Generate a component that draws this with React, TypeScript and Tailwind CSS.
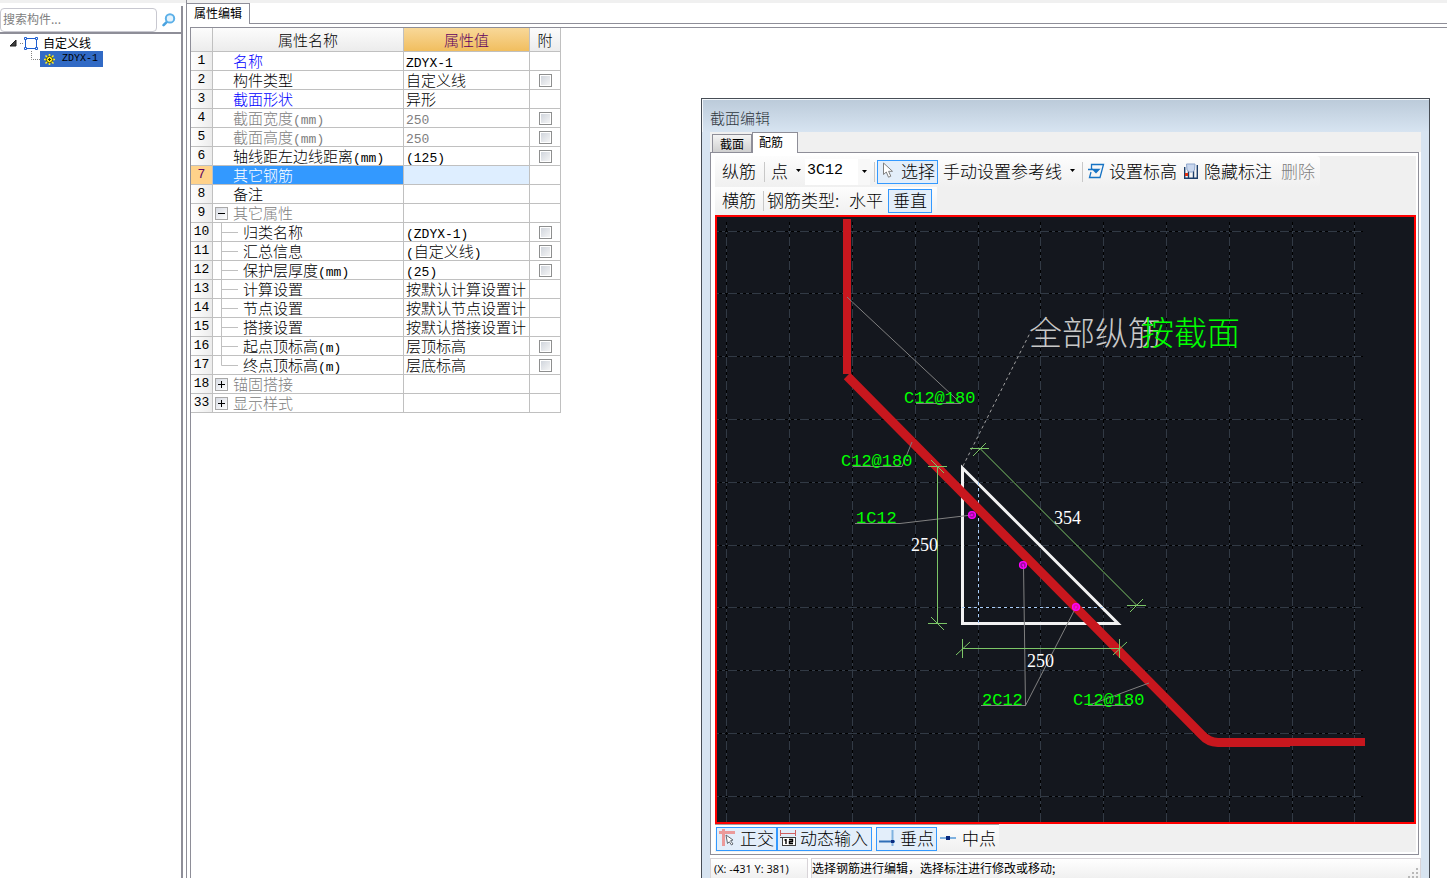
import { useState } from "react";
import type { ReactNode } from "react";

interface Row {
  no: number;
  name: string;
  value?: string;
  check?: boolean;
  tone?: "link" | "muted";
  group?: "open" | "closed";
  child?: boolean;
  last?: boolean;
}

const rows: Row[] = [
  { no: 1, name: "名称", value: "ZDYX-1", tone: "link" },
  { no: 2, name: "构件类型", value: "自定义线", check: true },
  { no: 3, name: "截面形状", value: "异形", tone: "link" },
  { no: 4, name: "截面宽度(mm)", value: "250", check: true, tone: "muted" },
  { no: 5, name: "截面高度(mm)", value: "250", check: true, tone: "muted" },
  { no: 6, name: "轴线距左边线距离(mm)", value: "(125)", check: true },
  { no: 7, name: "其它钢筋" },
  { no: 8, name: "备注" },
  { no: 9, name: "其它属性", tone: "muted", group: "open" },
  { no: 10, name: "归类名称", value: "(ZDYX-1)", check: true, child: true },
  { no: 11, name: "汇总信息", value: "(自定义线)", check: true, child: true },
  { no: 12, name: "保护层厚度(mm)", value: "(25)", check: true, child: true },
  { no: 13, name: "计算设置", value: "按默认计算设置计", child: true },
  { no: 14, name: "节点设置", value: "按默认节点设置计", child: true },
  { no: 15, name: "搭接设置", value: "按默认搭接设置计", child: true },
  { no: 16, name: "起点顶标高(m)", value: "层顶标高", check: true, child: true },
  { no: 17, name: "终点顶标高(m)", value: "层底标高", check: true, child: true, last: true },
  { no: 18, name: "锚固搭接", tone: "muted", group: "closed" },
  { no: 33, name: "显示样式", tone: "muted", group: "closed" },
];

const gridX = [726, 789, 852, 915, 978, 1040, 1103, 1166, 1229, 1292, 1354];
const gridY = [231, 293, 356, 419, 482, 545, 607, 670, 733, 796];

// Latin runs use the monospaced face, a little smaller than the Chinese text
function Mixed({ text }: { text: string }) {
  return (
    <>
      {text.split(/([\x20-\x7e]+)/).map((part, i) =>
        i % 2 ? (
          <span key={i} className="font-['Liberation_Mono',monospace] text-[13px] leading-none">{part}</span>
        ) : (
          part
        )
      )}
    </>
  );
}

function Sidebar() {
  return (
    <aside className="w-[183px] shrink-0 pt-1.5">
      <div className="h-full border-r-2 border-[#8e8e98]">
        <form className="flex h-[28px] items-start border-b-2 border-[#8e8e98]" onSubmit={(e) => e.preventDefault()}>
          <input
            type="text"
            aria-label="搜索构件"
            placeholder="搜索构件..."
            className="mt-0.5 h-6 w-[157px] rounded-sm border border-[#c8c8d0] px-0.5 pb-1 text-xs font-normal outline-none placeholder:text-[#808080]"
          />
          <button type="submit" aria-label="搜索" className="mt-1 flex h-5 w-6 items-center justify-center">
            <svg width="14" height="14" viewBox="0 0 14 14" fill="none">
              <path d="M4.6 9.2L1.6 12.2" stroke="#4aa3e0" strokeWidth="2.6" strokeLinecap="round" />
              <circle cx="8" cy="5.4" r="4.2" fill="#e4f3fd" stroke="#5cb0e8" strokeWidth="2" />
            </svg>
          </button>
        </form>
        <ul className="pt-px text-xs leading-4 font-normal">
          <li className="flex h-4 items-center pl-2">
            <svg width="33" height="16" viewBox="0 0 33 16" fill="none" className="mr-0.5 shrink-0">
              <path d="M8 5V11H2Z" fill="#404040" stroke="#202020" />
              <path d="M12 8.5H16" stroke="#808080" strokeDasharray="1 1" />
              <path d="M17.5 3.5H28.5V13.5H17.5Z" stroke="#1f5fd0" />
              <path d="M16.5 2.5h2v2h-2zM27.5 2.5h2v2h-2zM16.5 12.5h2v2h-2zM27.5 12.5h2v2h-2z" fill="#fff" stroke="#1f5fd0" />
            </svg>
            自定义线
          </li>
          <li className="flex h-4 items-center pl-[31px]">
            <svg width="9" height="16" viewBox="0 0 9 16" fill="none" className="shrink-0">
              <path d="M0.5 0V8.5H9" stroke="#808080" strokeDasharray="1 1" />
            </svg>
            <span className="flex h-4 items-center bg-[#316ac5] pr-[5px] pl-1 font-['Liberation_Mono',monospace] text-[10px] text-black">
              <svg width="11" height="11" viewBox="0 0 11 11" className="mr-[7px]" fill="none">
                <path d="M5.5 0V11M0 5.5H11M1.5 1.5L9.5 9.5M9.5 1.5L1.5 9.5" stroke="#ffee22" strokeWidth="1.6" />
                <circle cx="5.5" cy="5.5" r="3.2" fill="#ffee22" stroke="#303000" strokeWidth="0.8" />
                <path d="M4 5.5H7M5.5 4V7" stroke="#303000" />
              </svg>
              ZDYX-1
            </span>
          </li>
        </ul>
      </div>
    </aside>
  );
}

function PropertyTable() {
  const [selected, setSelected] = useState(7);
  const cell = "border-r border-b border-[#c0c0c0] p-0";

  return (
    <table className="w-[370px] table-fixed border-separate border-spacing-0 text-[15px] leading-[18px]">
      <colgroup>
        <col className="w-[22px]" />
        <col className="w-[191px]" />
        <col className="w-[126px]" />
        <col className="w-[31px]" />
      </colgroup>
      <thead>
        <tr className="h-6">
          <th className={`${cell} bg-linear-to-b from-[#fcfcfc] to-[#ececec]`} />
          <th className={`${cell} bg-linear-to-b from-[#fcfcfc] to-[#ececec] font-light`}>属性名称</th>
          <th className={`${cell} bg-linear-to-b from-[#f8d898] to-[#f1be5e] font-light text-[#600060]`}>属性值</th>
          <th className={`${cell} bg-linear-to-b from-[#fcfcfc] to-[#ececec] font-light`}>附</th>
        </tr>
      </thead>
      <tbody>
        {rows.map((row) => {
          const active = row.no === selected;
          const color = active
            ? "text-white"
            : row.tone === "link"
            ? "text-[#0000ff]"
            : row.tone === "muted"
            ? "text-[#808080]"
            : "text-black";
          return (
            <tr key={row.no} className="h-[19px]" onClick={() => setSelected(row.no)}>
              <td
                className={`${cell} text-center font-['Liberation_Mono',monospace] text-[13px] ${
                  active ? "bg-[#ffd28a] text-[#600060]" : "bg-linear-to-r from-white to-[#ececec]"
                }`}
              >
                {row.no}
              </td>
              <td className={`${cell} ${color} ${active ? "bg-[#3399ff]" : ""}`}>
                <div className="flex h-[18px] items-center">
                  {row.child ? (
                    <svg width="30" height="18" viewBox="0 0 30 18" fill="none" className="shrink-0 overflow-visible">
                      <path d={row.last ? "M8.5 -1V9.5H25" : "M8.5 -1V18M8.5 9.5H25"} stroke="#c0c0c0" />
                    </svg>
                  ) : row.group ? (
                    <button
                      type="button"
                      aria-label={row.name}
                      className="mr-[5px] ml-0.5 flex h-[13px] w-[13px] shrink-0 items-center justify-center border border-[#a8a8a8] bg-linear-to-br from-[#d8dce4] to-white"
                    >
                      <svg width="7" height="7" viewBox="0 0 7 7" stroke="#000">
                        <path d={row.group === "open" ? "M0 3.5H7" : "M0 3.5H7M3.5 0V7"} />
                      </svg>
                    </button>
                  ) : (
                    <span className="w-5 shrink-0" />
                  )}
                  <span className="whitespace-nowrap">
                    <Mixed text={row.name} />
                  </span>
                </div>
              </td>
              <td className={`${cell} ${row.tone === "muted" ? "text-[#808080]" : ""} ${active ? "bg-[#deeeff]" : ""}`}>
                <div className="flex h-[18px] items-center pl-0.5">
                  <span className="whitespace-nowrap">
                    <Mixed text={row.value ?? ""} />
                  </span>
                </div>
              </td>
              <td className={cell}>
                {row.check && (
                  <input
                    type="checkbox"
                    aria-label={`附 ${row.name}`}
                    className="mx-auto block h-[13px] w-[13px] appearance-none border border-[#8e8f8f] bg-linear-to-br from-[#cdd2da] to-[#f8f8f8] ring-1 ring-white ring-inset checked:bg-[#3399ff]"
                  />
                )}
              </td>
            </tr>
          );
        })}
      </tbody>
    </table>
  );
}

function Caret() {
  return (
    <svg width="5" height="3" viewBox="0 0 5 3" className="shrink-0">
      <path d="M0 0H5L2.5 3Z" />
    </svg>
  );
}

function Divider() {
  return <span className="h-5 w-px shrink-0 bg-[#c8c8c8]" />;
}

function ToolButton({ active, children, className = "" }: { active?: boolean; children: ReactNode; className?: string }) {
  return (
    <button
      type="button"
      aria-pressed={active}
      className={`flex h-6 shrink-0 items-center border pb-0.5 whitespace-nowrap ${
        active ? "border-[#3399ff] bg-[#e3eefa]" : "border-transparent"
      } ${className}`}
    >
      {children}
    </button>
  );
}

function Toolbar() {
  return (
    <div className="text-[17px]">
      <div className="flex h-[31px] w-[605px] items-center rounded-r-sm bg-linear-to-b from-[#fdfdfd] to-[#f0f0f0] pl-[7px]">
        <span className="mr-2 shrink-0 pb-0.5">纵筋</span>
        <Divider />
        <button type="button" className="ml-1.5 flex shrink-0 items-center gap-2 pb-0.5">
          点
          <Caret />
        </button>
        <div className="relative mr-1 ml-1 flex shrink-0 items-center">
          <select
            aria-label="钢筋信息"
            className="h-[26px] w-[65px] appearance-none bg-white pl-0.5 font-['Liberation_Mono',monospace] text-[15px] outline-none"
          >
            <option>3C12</option>
          </select>
          <span className="pointer-events-none absolute right-0 flex h-[26px] w-3 items-center justify-center bg-[#f8f8f8]">
            <Caret />
          </span>
        </div>
        <Divider />
        <ToolButton active className="ml-0.5 gap-1.5 pr-0.5 pl-1">
          <svg width="13" height="17" viewBox="0 0 13 17" fill="#fff" stroke="#808080">
            <path d="M1.5 1V12.5L4.3 10L6.5 15.2L8.8 14.2L6.6 9.3H10.5Z" />
          </svg>
          选择
        </ToolButton>
        <ToolButton className="ml-1 gap-2">
          手动设置参考线
          <Caret />
        </ToolButton>
        <span className="ml-1.5 flex items-center">
          <Divider />
        </span>
        <ToolButton className="ml-1 gap-1">
          <svg width="17" height="16" viewBox="0 0 17 16" fill="none" stroke="#1673c4" strokeWidth="1.3">
            <path d="M3.5 6V1.5H15.5L12 14.5H1.5L3 9M0 6.5H5" />
            <path d="M5 6.5H11L8 9.5Z" fill="#1673c4" />
          </svg>
          设置标高
        </ToolButton>
        <ToolButton className="ml-[5px] gap-1.5">
          <svg width="14" height="16" viewBox="0 0 14 16" fill="none">
            <path d="M0.7 4V15.3H13.3V2M4.5 8V15M9.5 8V15" stroke="#1d3f6b" strokeWidth="1.4" />
            <path d="M2.5 1H11L10.5 7L8.5 9H5.5L3 7Z" fill="#c9d7ee" stroke="#8ea6cc" />
            <path d="M1 10H4V13H1Z" fill="#e03010" />
          </svg>
          隐藏标注
        </ToolButton>
        <button type="button" disabled className="ml-2 shrink-0 pb-0.5 text-[#808080]">
          删除
        </button>
      </div>
      <div className="flex h-7 w-[222px] items-center bg-linear-to-b from-[#fdfdfd] to-[#f0f0f0] pl-[7px]">
        <span className="mr-[7px] shrink-0 pb-0.5">横筋</span>
        <Divider />
        <span className="ml-[3px] w-[81px] shrink-0 pb-0.5">钢筋类型:</span>
        <ToolButton>水平</ToolButton>
        <ToolButton active className="ml-1 px-1">
          垂直
        </ToolButton>
      </div>
    </div>
  );
}

function Drawing() {
  return (
    <div className="min-h-0 flex-1 overflow-hidden border-2 border-[#ff0000] bg-[#14171e]">
      <svg className="block h-full w-full" fill="none" role="img" aria-label="截面配筋图">
        <g transform="translate(-717 -217)">
          {gridX.map((x) => (
            <g key={x}>
              <path d={`M${x + 0.5} 222V822`} stroke="#323a45" />
              <path d={`M${x + 0.5} 222V822`} stroke="#000" strokeDasharray="3 3 3 3 3 9" />
            </g>
          ))}
          {gridY.map((y) => (
            <g key={y}>
              <path d={`M717 ${y + 0.5}H1363`} stroke="#323a45" />
              <path d={`M717 ${y + 0.5}H1363`} stroke="#000" strokeDasharray="3 3 3 3 3 9" strokeDashoffset="4" />
            </g>
          ))}

          {/* concrete outline */}
          <path d="M962.5 468V623.5H1118Z" stroke="#f2f2f2" strokeWidth="3" />
          <path d="M978.5 482V623M962 607.5H1104" stroke="#a8ccf8" strokeDasharray="3 3" />

          {/* main bar */}
          <path d="M847 219V374" stroke="#c8171e" strokeWidth="8" />
          <path d="M847 376L1202 735Q1208 742 1218 742.5H1290" stroke="#c8171e" strokeWidth="9" />
          <path d="M1290 742H1365" stroke="#c8171e" strokeWidth="8" />

          {/* leaders */}
          <g stroke="#808080">
            <path d="M847 297L961 403.5H916" />
            <path d="M912 442L902 466.5H853" />
            <path d="M972 515L900 523.5H855" />
            <path d="M1023.5 565L1025.5 705.5L1076 607M981 705.5H1026" />
            <path d="M1149 683L1088 705.5H1131" />
            <path d="M963 466L1030 333" stroke="#a0a0a0" strokeDasharray="3 3" />
          </g>

          {/* dimensions */}
          <g stroke="#7cc667">
            <path d="M937.5 466V624M928 466.5H947M928 623.5H947M931 460L944 473M931 617L944 630" />
            <path d="M962 648.5H1120M962.5 639V658M1119.5 639V658M956 655L970 642M1113 655L1127 642" />
            <path d="M980 448.5L1137 605.5M970 448.5H989M1127 605.5H1146M973 456L986 443M1130 612L1143 599" />
          </g>

          {[
            [972, 515],
            [1023, 565],
            [1076, 607],
          ].map(([cx, cy]) => (
            <g key={cx}>
              <circle cx={cx} cy={cy} r="3.4" fill="#ff00ff" fillOpacity="0.6" stroke="#ff00ff" strokeWidth="1.4" />
              <circle cx={cx} cy={cy} r="1" fill="#ff00ff" />
            </g>
          ))}

          <g className="fill-[#00ff00] font-['Liberation_Mono',monospace] text-[17px]">
            <text x="904" y="403">C12@180</text>
            <text x="841" y="466">C12@180</text>
            <text x="856" y="523">1C12</text>
            <text x="982" y="705">2C12</text>
            <text x="1073" y="705">C12@180</text>
          </g>
          <g className="fill-white font-['Liberation_Serif',serif] text-[18px]">
            <text x="911" y="551">250</text>
            <text x="1054" y="524">354</text>
            <text x="1027" y="667">250</text>
          </g>
          <g className="text-[33px]">
            <text x="1029" y="345" className="fill-[#c8c8c8]">全部纵筋</text>
            <text x="1141" y="345" className="fill-[#00ff00]">按截面</text>
          </g>
        </g>
      </svg>
    </div>
  );
}

function SnapBar() {
  return (
    <div className="flex h-7 w-[284px] items-center border-t border-[#a0a0a0] bg-linear-to-b from-[#fdfdfd] to-[#f0f0f0] pl-px text-[17px]">
      <ToolButton active className="w-[61px] gap-1 pl-0.5">
        <svg width="17" height="17" viewBox="0 0 17 17" fill="none">
          <path d="M0 3.5H16M4.5 0V17" stroke="#eb9a9a" strokeWidth="3" />
          <path d="M7 6L14 11L11.5 11.7L14 15L12.5 16L10.3 12.8L8.5 14.5Z" fill="#fff" stroke="#606870" />
        </svg>
        正交
      </ToolButton>
      <ToolButton active className="w-[95px] gap-1 pl-0.5">
        <svg width="16" height="16" viewBox="0 0 16 16" fill="none">
          <path d="M0.5 0V6M15.5 0V6M0 3.5H16" stroke="#d06060" />
          <rect x="2.5" y="7.5" width="13" height="8" fill="#fff" stroke="#404040" />
          <path d="M0 7.5H16" stroke="#404040" />
          <path d="M6 9V14M4.5 10H6M9 9.5H12.5V11.5H9.5V13.5H13" stroke="#000" strokeWidth="1.4" />
        </svg>
        动态输入
      </ToolButton>
      <ToolButton active className="ml-1 w-[61px] gap-1 pl-0.5">
        <svg width="17" height="16" viewBox="0 0 17 16" fill="none">
          <path d="M13.5 0V16" stroke="#7fb2e0" strokeWidth="2" />
          <path d="M0 11.5H16" stroke="#2f6fb8" strokeWidth="2" />
          <path d="M12 10H15V13H12Z" fill="#0a2a80" />
        </svg>
        垂点
      </ToolButton>
      <ToolButton className="ml-0.5 gap-1.5">
        <svg width="16" height="16" viewBox="0 0 16 16" fill="none">
          <path d="M0 8H16" stroke="#7fb2e0" strokeWidth="2" />
          <path d="M6 6H10V10H6Z" fill="#0a2a80" />
        </svg>
        中点
      </ToolButton>
    </div>
  );
}

function SectionDialog() {
  return (
    <section
      role="dialog"
      aria-label="截面编辑"
      className="absolute top-[98px] right-[17px] bottom-0 left-[701px] flex flex-col border border-b-0 border-[#474d55] bg-[#d7e4f1]"
    >
      <h2 className="h-[33px] shrink-0 border-t border-l border-[#f4f8fc] bg-linear-to-b from-[#bccbda] to-[#d7e4f1] pt-1.5 pl-[7px] text-[15px] leading-6 text-[#30383f]">
        截面编辑
      </h2>
      <div className="mr-2 ml-2 flex min-h-0 flex-1 flex-col bg-white">
        <div role="tablist" className="flex h-5 shrink-0 items-end bg-[#f0f0f0] pl-0.5 text-xs font-normal">
          <button
            role="tab"
            type="button"
            aria-selected="false"
            className="h-[18px] w-10 border border-b-0 border-[#8e8e98] bg-linear-to-b from-[#f4f4f4] to-[#d0d0d0]"
          >
            截面
          </button>
          <button
            role="tab"
            type="button"
            aria-selected="true"
            className="z-10 -mb-px h-[21px] w-[46px] border border-b-0 border-[#8e8e98] bg-white pr-2 pb-0.5"
          >
            配筋
          </button>
        </div>
        <div className="mr-0.5 flex min-h-0 flex-1 flex-col border border-[#8e8e98] pt-[3px] pr-0.5 pb-0.5 pl-1">
          <div className="flex min-h-0 flex-1 flex-col bg-[#f0f0f0]">
            <Toolbar />
            <Drawing />
            <SnapBar />
          </div>
        </div>
        <footer className="mt-[3px] flex h-5 shrink-0 gap-[3px] text-xs leading-5 font-normal">
          <span className="w-[98px] border border-b-0 border-[#d8d4d8] bg-linear-to-b from-white to-[#f0f0f0] pl-[3px] font-['Open_Sans',sans-serif] text-[11px] whitespace-nowrap">
            (X: -431 Y: 381)
          </span>
          <span className="flex flex-1 items-end justify-between border border-b-0 border-[#d8d4d8] bg-linear-to-b from-white to-[#f0f0f0]">
            选择钢筋进行编辑，选择标注进行修改或移动;
            <svg width="11" height="11" viewBox="0 0 11 11" fill="#b8b8b8" className="mr-px">
              <path d="M8 1h2v2h-2zM4 5h2v2h-2zM8 5h2v2h-2zM0 9h2v2h-2zM4 9h2v2h-2zM8 9h2v2h-2z" />
            </svg>
          </span>
        </footer>
      </div>
    </section>
  );
}

export default function App() {
  return (
    <div className="relative flex h-screen flex-col overflow-hidden bg-white font-['Noto_Sans_CJK_SC',sans-serif] font-light text-black">
      <div className="h-[3px] shrink-0 bg-[#f0f0f0]" />
      <div className="-mt-[3px] flex min-h-0 flex-1">
        <Sidebar />
        <main className="ml-[3px] flex min-w-0 flex-1 flex-col border-l border-[#8e8e98] pt-[3px]">
          <div role="tablist" className="flex h-[21px] shrink-0 text-xs font-normal">
            <button
              role="tab"
              type="button"
              aria-selected="true"
              className="w-[63px] shrink-0 border-t border-r border-[#8e8e98] pb-0.5"
            >
              属性编辑
            </button>
            <div className="flex-1 border-b border-[#8e8e98]" />
          </div>
          <div className="mt-[3px] ml-[3px] flex-1 border-t border-l border-[#8e8e98]">
            <PropertyTable />
          </div>
        </main>
      </div>
      <SectionDialog />
    </div>
  );
}
